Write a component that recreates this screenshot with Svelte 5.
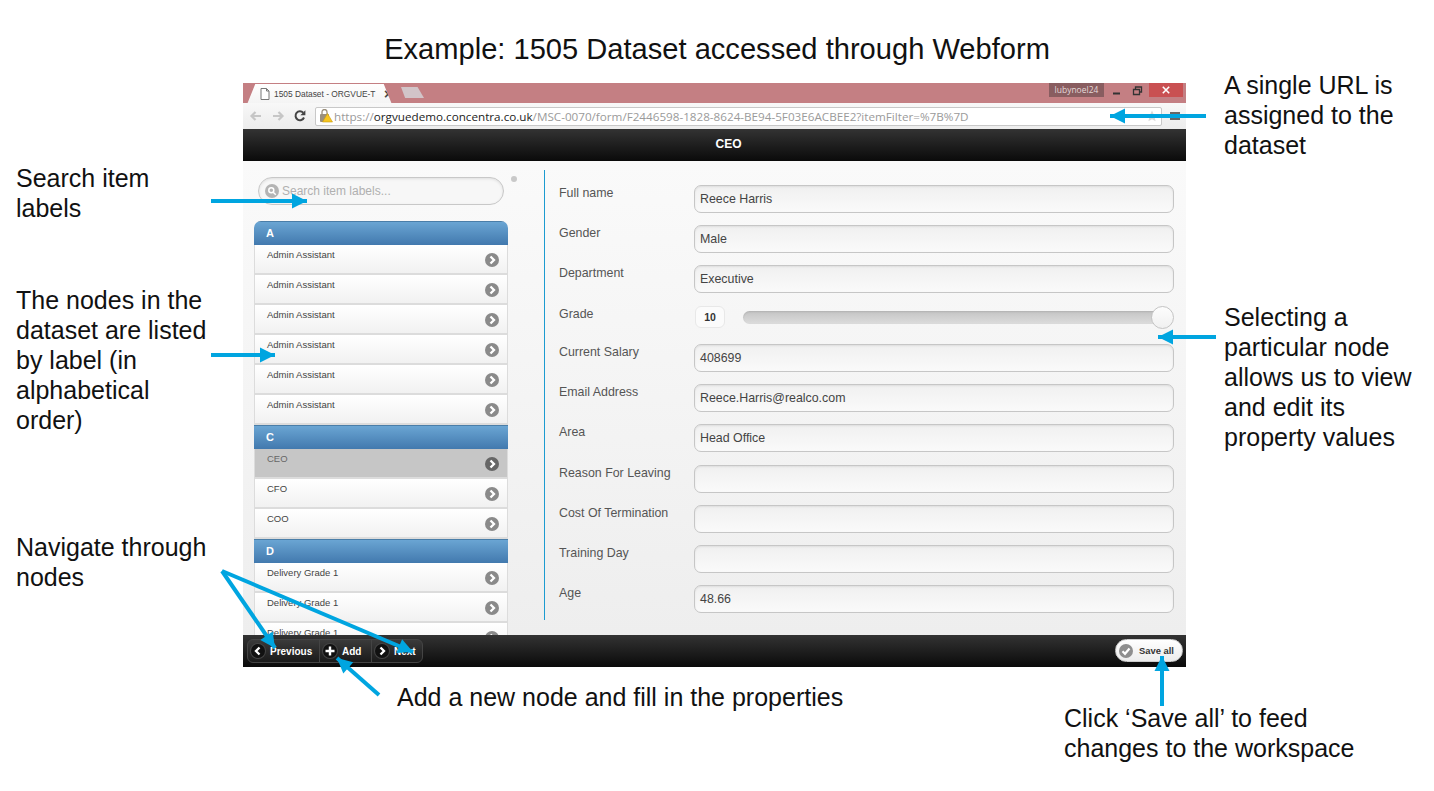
<script lang="ts">
  const groups = [
    { letter: "A", items: Array(6).fill("Admin Assistant") },
    { letter: "C", items: ["CEO", "CFO", "COO"] },
    { letter: "D", items: Array(3).fill("Delivery Grade 1") },
  ];
  const fields = [
    { label: "Full name", value: "Reece Harris" },
    { label: "Gender", value: "Male" },
    { label: "Department", value: "Executive" },
    { label: "Grade", slider: "10" },
    { label: "Current Salary", value: "408699" },
    { label: "Email Address", value: "Reece.Harris@realco.com" },
    { label: "Area", value: "Head Office" },
    { label: "Reason For Leaving", value: "" },
    { label: "Cost Of Termination", value: "" },
    { label: "Training Day", value: "" },
    { label: "Age", value: "48.66" },
  ];
  // x1,y1 tail -> x2,y2 tip of the blue callout arrows
  const arrows = [
    [1206, 116, 1110, 116],
    [211, 201, 307, 201],
    [211, 355, 275, 355],
    [1216, 337, 1158, 337],
    [222, 571, 275, 648],
    [222, 571, 413, 652],
    [379, 695, 337, 658],
    [1162, 706, 1162, 656],
  ];
  function head(a: number[]) {
    const [x1, y1, x2, y2] = a;
    const len = Math.hypot(x2 - x1, y2 - y1);
    const ux = (x2 - x1) / len;
    const uy = (y2 - y1) / len;
    const bx = x2 - ux * 15;
    const by = y2 - uy * 15;
    return `${x2},${y2} ${bx - uy * 7.5},${by + ux * 7.5} ${bx + uy * 7.5},${by - ux * 7.5}`;
  }
</script>

<div class="slide">
  <h1>Example: 1505 Dataset accessed through Webform</h1>

  <div class="window">
    <div class="tabstrip">
      <div class="tab">
        <svg class="page-icon" viewBox="0 0 10 12" width="10" height="12">
          <path d="M1 .5h5.5L9 3v8.5H1z M6.5 .5V3H9" fill="#fff" stroke="#777" stroke-width="1" />
        </svg>
        <span class="tab-title">1505 Dataset - ORGVUE-T</span>
        <span class="tab-close">×</span>
      </div>
      <div class="newtab"></div>
      <div class="spacer"></div>
      <div class="user">lubynoel24</div>
      <svg class="winctl" viewBox="0 0 12 10" width="12" height="10">
        <path d="M2 7.500h7" stroke="#333" stroke-width="2" />
      </svg>
      <svg class="winctl restore" viewBox="0 0 12 10" width="12" height="10">
        <path d="M3.500 3V1h6v5h-2M1.500 3.500h6v5h-6z" fill="none" stroke="#333" stroke-width="1.300" />
      </svg>
      <div class="close">
        <svg viewBox="0 0 10 10" width="8" height="8">
          <path d="M1 1l8 8M9 1l-8 8" stroke="#fff" stroke-width="2" />
        </svg>
      </div>
    </div>

    <div class="toolbar">
      <svg viewBox="0 0 14 14" width="14" height="14">
        <path d="M12 7H3M6.500 3 2.500 7l4 4" fill="none" stroke="#c6c6c6" stroke-width="2.200" />
      </svg>
      <svg viewBox="0 0 14 14" width="14" height="14">
        <path d="M2 7h9M7.500 3l4 4-4 4" fill="none" stroke="#c6c6c6" stroke-width="2.200" />
      </svg>
      <svg viewBox="0 0 14 14" width="14" height="14">
        <path d="M11 8.500A4.400 4.400 0 1 1 10.200 3.800" fill="none" stroke="#444" stroke-width="2" />
        <path d="M12.400 1.200v5h-5z" fill="#444" />
      </svg>
      <div class="urlbar">
        <svg class="lock" viewBox="0 0 14 14" width="14" height="14">
          <rect x="1" y="5" width="9" height="8" rx="1" fill="#9a8f7c" />
          <path d="M3 5V3a2.500 2.500 0 0 1 5 0v2" fill="none" stroke="#9a8f7c" stroke-width="1.300" />
          <path d="M8.500 4.500 13.500 13h-10z" fill="#f6c520" stroke="#c79a10" stroke-width=".6" />
        </svg>
        <span class="url"><span class="dim">https://</span>orgvuedemo.concentra.co.uk<span class="dim">/MSC-0070/form/F2446598-1828-8624-BE94-5F03E6ACBEE2?itemFilter=%7B%7D</span></span>
        <svg class="star" viewBox="0 0 12 12" width="12" height="12">
          <path d="M6 .5l1.700 3.700 4 .4-3 2.700.9 4L6 9.300l-3.600 2 .9-4-3-2.700 4-.4z" fill="#d9d9d9" />
        </svg>
      </div>
      <div class="menu"><i></i><i></i><i></i></div>
    </div>

    <div class="header">CEO</div>

    <div class="content">
      <aside class="sidebar">
        <div class="search-row">
          <div class="search">
            <span class="search-icon">
              <svg viewBox="0 0 10 10" width="10" height="10">
                <circle cx="4.300" cy="4.300" r="2.500" fill="none" stroke="#fff" stroke-width="1.500" />
                <path d="M6.200 6.200 8.800 8.800" stroke="#fff" stroke-width="1.500" />
              </svg>
            </span>
            <span>Search item labels...</span>
          </div>
          <span class="dot"></span>
        </div>
        <div class="list">
          {#each groups as group}
            <div class="divider">{group.letter}</div>
            {#each group.items as item}
              <div class="item" class:selected={item === "CEO"}>
                <span>{item}</span>
                <span class="chevron">
                  <svg viewBox="0 0 14 14" width="14" height="14">
                    <path d="M5.500 3.500 9 7l-3.500 3.500" fill="none" stroke="#fff" stroke-width="2.300" />
                  </svg>
                </span>
              </div>
            {/each}
          {/each}
        </div>
      </aside>

      <div class="form">
        {#each fields as field}
          <div class="row" class:grade={field.slider}>
            <div class="label">{field.label}</div>
            {#if field.slider}
              <div class="slider">
                <div class="slider-value">{field.slider}</div>
                <div class="track"><div class="thumb"></div></div>
              </div>
            {:else}
              <div class="input">{field.value}</div>
            {/if}
          </div>
        {/each}
      </div>
    </div>

    <div class="footer">
      <div class="btn-group">
        <div class="btn prev">
          <span class="btn-icon">
            <svg viewBox="0 0 12 12" width="12" height="12"><path d="M7.500 2.500 4 6l3.500 3.500" fill="none" stroke="#fff" stroke-width="2.300" /></svg>
          </span>Previous
        </div>
        <div class="btn add">
          <span class="btn-icon">
            <svg viewBox="0 0 12 12" width="12" height="12"><path d="M6 1.500v9M1.500 6h9" fill="none" stroke="#fff" stroke-width="2.400" /></svg>
          </span>Add
        </div>
        <div class="btn next">
          <span class="btn-icon">
            <svg viewBox="0 0 12 12" width="12" height="12"><path d="M4.500 2.500 8 6l-3.500 3.500" fill="none" stroke="#fff" stroke-width="2.300" /></svg>
          </span>Next
        </div>
      </div>
      <div class="save">
        <span class="save-icon">
          <svg viewBox="0 0 14 14" width="14" height="14"><path d="M3.500 7.300 6 9.800 10.500 4.500" fill="none" stroke="#fff" stroke-width="2.200" /></svg>
        </span>Save all
      </div>
    </div>
  </div>

  <p class="note" style="left:1224px;top:70px">A single URL is<br />assigned to the<br />dataset</p>
  <p class="note" style="left:16px;top:163px">Search item<br />labels</p>
  <p class="note" style="left:16px;top:285px">The nodes in the<br />dataset are listed<br />by label (in<br />alphabetical<br />order)</p>
  <p class="note" style="left:16px;top:532px">Navigate through<br />nodes</p>
  <p class="note" style="left:1224px;top:302px">Selecting a<br />particular node<br />allows us to view<br />and edit its<br />property values</p>
  <p class="note" style="left:397px;top:682px">Add a new node and fill in the properties</p>
  <p class="note" style="left:1064px;top:703px">Click ‘Save all’ to feed<br />changes to the workspace</p>

  <svg class="arrows" viewBox="0 0 1434 791" width="1434" height="791">
    {#each arrows as a}
      <line x1={a[0]} y1={a[1]} x2={a[2]} y2={a[3]} stroke="#00a5e0" stroke-width="4" />
      <polygon points={head(a)} fill="#00a5e0" />
    {/each}
  </svg>
</div>

<style>
  :global(body) {
    margin: 0;
    background: #fff;
  }
  .slide {
    position: relative;
    width: 1434px;
    height: 791px;
    overflow: hidden;
    font-family: "Liberation Sans", Arial, sans-serif;
    color: #111;
  }
  h1 {
    margin: 0;
    height: 83px;
    padding-top: 34px;
    box-sizing: border-box;
    font-size: 29.100px;
    line-height: 31px;
    font-weight: 400;
    text-align: center;
    color: #111;
    white-space: nowrap;
  }
  .note {
    position: absolute;
    margin: 0;
    font-size: 25px;
    line-height: 30px;
    white-space: nowrap;
  }
  .arrows {
    position: absolute;
    left: 0;
    top: 0;
    pointer-events: none;
  }

  .window {
    width: 943px;
    height: 584px;
    margin-left: 243px;
    display: flex;
    flex-direction: column;
    overflow: hidden;
  }

  /* browser chrome */
  .tabstrip {
    height: 20px;
    flex: none;
    display: flex;
    align-items: flex-start;
    background: #c47f83;
  }
  .tab {
    width: 153px;
    height: 19px;
    margin-top: 1px;
    padding-left: 17px;
    box-sizing: border-box;
    display: flex;
    align-items: center;
    gap: 4px;
    background: linear-gradient(#fff, #f4f4f4);
    clip-path: polygon(0 100%, 3% 100%, 8% 0, 92% 0, 97% 100%, 100% 100%);
    font-family: "Liberation Sans", sans-serif;
    font-size: 8.400px;
    color: #444;
    white-space: nowrap;
  }
  .page-icon {
    flex: none;
  }
  .tab-title {
    width: 104px;
    flex: none;
  }
  .tab-close {
    font-size: 14px;
    font-weight: 700;
    line-height: 1;
    color: #444;
    margin-left: 2px;
  }
  .newtab {
    width: 23px;
    height: 11px;
    margin: 4px 0 0 5px;
    background: #d2c4c8;
    clip-path: polygon(0 0, 72% 0, 100% 100%, 18% 100%);
  }
  .spacer {
    flex: 1;
  }
  .user {
    width: 55px;
    height: 14px;
    background: #895d60;
    color: #e4d8d8;
    font-family: "Open Sans", sans-serif;
    font-size: 8.500px;
    line-height: 14px;
    text-align: center;
  }
  .winctl {
    margin: 3px 0 0 7px;
    width: 12px;
  }
  .winctl.restore {
    margin-left: 9px;
  }
  .close {
    width: 34px;
    height: 14px;
    margin: 0 3px 0 5px;
    background: #c95052;
    display: flex;
    align-items: center;
    justify-content: center;
  }
  .toolbar {
    height: 26px;
    flex: none;
    display: flex;
    align-items: center;
    padding-left: 6px;
    gap: 8px;
    box-sizing: border-box;
    background: linear-gradient(#f8f8f8, #ececec);
  }
  .urlbar {
    width: 847px;
    height: 19px;
    box-sizing: border-box;
    display: flex;
    align-items: center;
    padding-left: 3px;
    background: #fff;
    border: 1px solid #c8c8c8;
    border-radius: 2px;
  }
  .lock {
    flex: none;
  }
  .url {
    flex: 1;
    margin-left: 1px;
    font-family: "Open Sans", sans-serif;
    font-size: 11.680px;
    color: #222;
    white-space: nowrap;
  }
  .url .dim {
    color: #9a9a9a;
  }
  .star {
    margin-right: 3px;
    flex: none;
  }
  .menu {
    display: flex;
    flex-direction: column;
    gap: 1px;
  }
  .menu i {
    display: block;
    width: 10px;
    height: 2px;
    background: #666;
  }

  /* app */
  .header {
    height: 32px;
    flex: none;
    padding-left: 28px;
    box-sizing: border-box;
    background: linear-gradient(#333, #0a0a0a);
    color: #fff;
    font-size: 12px;
    font-weight: 700;
    line-height: 30px;
    text-align: center;
  }
  .content {
    flex: 1;
    min-height: 0;
    display: flex;
    background: linear-gradient(#fafafa, #eeeeee);
  }
  .sidebar {
    width: 301px;
    flex: none;
    height: 474px;
    overflow: hidden;
    padding: 16px 0 0 11px;
    box-sizing: border-box;
  }
  .search-row {
    display: flex;
    align-items: flex-start;
    margin-bottom: 16px;
    padding-left: 4px;
  }
  .search {
    width: 246px;
    height: 28px;
    box-sizing: border-box;
    border: 1.500px solid #c8c8c8;
    border-radius: 14px;
    box-shadow: inset 0 1px 3px rgba(0, 0, 0, 0.1);
    display: flex;
    align-items: center;
    gap: 3px;
    padding-left: 6px;
    font-size: 12px;
    color: #b0b0b0;
    background: #f7f7f7;
  }
  .search-icon {
    width: 14px;
    height: 14px;
    border-radius: 50%;
    background: #b4b4b4;
    display: flex;
    align-items: center;
    justify-content: center;
  }
  .dot {
    width: 6px;
    height: 6px;
    margin: -1px 0 0 7px;
    border-radius: 50%;
    background: #c9c9c9;
  }
  .list {
    width: 254px;
    border-radius: 7px 7px 0 0;
    overflow: hidden;
  }
  .divider {
    height: 24px;
    box-sizing: border-box;
    padding-left: 12px;
    background: linear-gradient(#6aa5d3, #4279ae);
    border-top: 1px solid #4a7ea8;
    color: #fff;
    font-size: 11px;
    font-weight: 700;
    line-height: 22px;
  }
  .item {
    height: 30px;
    box-sizing: border-box;
    position: relative;
    padding: 4px 0 0 12px;
    background: linear-gradient(#fff, #f1f1f1);
    border: 1px solid #dcdcdc;
    border-top: 0;
    border-bottom-width: 2px;
    font-size: 9.500px;
    line-height: 12px;
    color: #444;
  }
  .item.selected {
    background: #c6c6c6;
    color: #666;
  }
  .chevron {
    position: absolute;
    right: 8px;
    top: 8px;
    width: 14px;
    height: 14px;
    border-radius: 50%;
    background: #8a8a8a;
  }
  .chevron svg {
    display: block;
  }
  .item.selected .chevron {
    background: #666;
  }
  .form {
    flex: 1;
    margin-top: 9px;
    height: 450px;
    border-left: 1.500px solid #1c9bd0;
    padding: 15px 12px 0 14px;
    box-sizing: border-box;
  }
  .row {
    display: flex;
    height: 28px;
    margin-bottom: 12px;
  }
  .row.grade {
    height: 27px;
  }
  /* the Area row sits one pixel further from Reason For Leaving */
  .row:nth-child(7) {
    margin-bottom: 13px;
  }
  .label {
    width: 135px;
    flex: none;
    padding-top: 1px;
    font-size: 12.400px;
    line-height: 14px;
    color: #555;
    white-space: nowrap;
  }
  .row.grade .label {
    padding-top: 2px;
  }
  .input {
    flex: 1;
    box-sizing: border-box;
    border: 1.500px solid #c6c6c6;
    border-radius: 7px;
    background: linear-gradient(#f0f0f0, #fafafa);
    box-shadow: inset 0 1px 2px rgba(0, 0, 0, 0.08);
    padding-left: 5px;
    font-size: 12.400px;
    line-height: 27px;
    color: #444;
  }
  .slider {
    flex: 1;
    display: flex;
    align-items: flex-start;
    padding-top: 1px;
  }
  .slider-value {
    width: 30px;
    height: 22px;
    margin-left: 1px;
    box-sizing: border-box;
    border: 1px solid #e8e8e8;
    border-radius: 6px;
    background: #fbfbfb;
    font-size: 10.500px;
    font-weight: 700;
    line-height: 21px;
    text-align: center;
    color: #333;
  }
  .track {
    position: relative;
    width: 417px;
    height: 13px;
    margin: 5px 0 0 18px;
    border-radius: 7px;
    background: linear-gradient(#c4c4c4, #dcdcdc);
    box-shadow: inset 0 1px 2px rgba(0, 0, 0, 0.1);
  }
  .thumb {
    position: absolute;
    right: -14px;
    top: -5px;
    width: 23px;
    height: 23px;
    box-sizing: border-box;
    border: 1px solid #c4c4c4;
    border-radius: 50%;
    background: linear-gradient(#fdfdfd, #f0f0f0);
  }
  .footer {
    height: 32px;
    flex: none;
    display: flex;
    align-items: center;
    justify-content: space-between;
    padding: 0 3px 0 4px;
    background: linear-gradient(#333, #0a0a0a);
  }
  .btn-group {
    display: flex;
    height: 24px;
    box-sizing: border-box;
    border: 1px solid #444;
    border-radius: 6px;
    background: linear-gradient(#3a3a3a, #1a1a1a);
  }
  .btn {
    display: flex;
    align-items: center;
    box-sizing: border-box;
    gap: 5px;
    padding-left: 3px;
    color: #fff;
    font-size: 10px;
    font-weight: 700;
    border-right: 1px solid #444;
  }
  .btn.prev {
    width: 72px;
  }
  .btn.add {
    width: 52px;
  }
  .btn.next {
    width: 50px;
    border-right: 0;
  }
  .btn-icon {
    width: 14px;
    height: 14px;
    border-radius: 50%;
    background: #111;
    box-shadow: 0 0 0 1px #444;
    display: flex;
    align-items: center;
    justify-content: center;
  }
  .save {
    width: 68px;
    height: 23px;
    margin-bottom: 1px;
    box-sizing: border-box;
    display: flex;
    align-items: center;
    gap: 6px;
    padding-left: 3px;
    border-radius: 12px;
    background: linear-gradient(#fff, #ececec);
    border: 1px solid #ccc;
    color: #333;
    font-size: 9.400px;
    font-weight: 700;
    white-space: nowrap;
  }
  .save-icon {
    width: 14px;
    height: 14px;
    border-radius: 50%;
    background: #8e8e8e;
    flex: none;
  }
  .save-icon svg {
    display: block;
  }
</style>
